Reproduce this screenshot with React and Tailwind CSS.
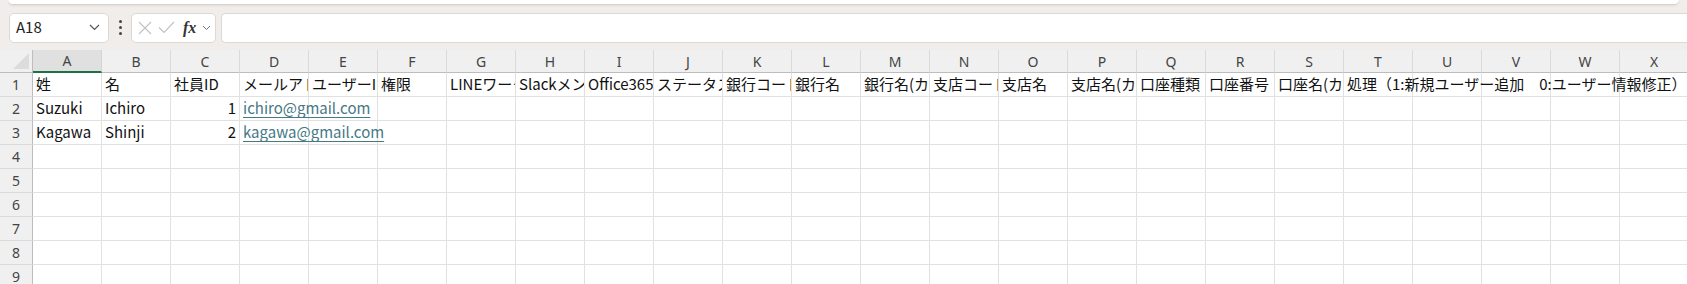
import React from 'react';

const COLS = 'ABCDEFGHIJKLMNOPQRSTUVWX'.split('');

const header = [
  '姓', '名', '社員ID', 'メールアドレス', 'ユーザーID', '権限', 'LINEワークス', 'Slackメンバー', 'Office365', 'ステータス',
  '銀行コード', '銀行名', '銀行名(カナ)', '支店コード', '支店名', '支店名(カナ)', '口座種類', '口座番号', '口座名(カナ)',
];

const rows = [
  { a: 'Suzuki', b: 'Ichiro', c: '1', d: 'ichiro@gmail.com' },
  { a: 'Kagawa', b: 'Shinji', c: '2', d: 'kagawa@gmail.com' },
];

const cellFont = { fontFamily: '"Noto Sans CJK JP", "Noto Sans", sans-serif' };

const NameBox = () => (
  <div className="flex items-center justify-between w-[100px] h-[30px] bg-white border border-[#dcd8d6] rounded-[5px] pl-[6px] pr-[8px]">
    <span className="text-[15px] text-[#222]" style={cellFont}>A18</span>
    <svg width="11" height="7" viewBox="0 0 11 7" fill="none" stroke="#555" strokeWidth="1.2">
      <path d="M1 1l4.5 4.5L10 1" />
    </svg>
  </div>
);

const FormulaButtons = () => (
  <div className="flex items-center w-[85px] h-[30px] bg-white border border-[#dcd8d6] rounded-[5px] pl-[6px] gap-[6px]">
    <svg width="14" height="14" viewBox="0 0 14 14" stroke="#c2c2c2" strokeWidth="1.1">
      <path d="M1 1l12 12M13 1L1 13" />
    </svg>
    <svg width="17" height="13" viewBox="0 0 17 13" fill="none" stroke="#c2c2c2" strokeWidth="1.1">
      <path d="M1 6.5l5 5L16 1" />
    </svg>
    <span className="text-[16px] italic text-[#333] leading-none ml-[2px]" style={{ fontFamily: '"Liberation Serif", serif', fontWeight: 600 }}>fx</span>
    <svg width="9" height="6" viewBox="0 0 9 6" fill="none" stroke="#777" strokeWidth="1">
      <path d="M1 1l3.5 3.5L8 1" />
    </svg>
  </div>
);

const Cell = ({ children, className = '', overflow = false }) => (
  <div
    className={`h-[24px] border-r border-b border-[#e1e1e1] bg-white flex items-center text-[15px] text-[#111] whitespace-nowrap ${overflow ? 'overflow-visible relative z-10' : 'overflow-hidden'} ${className}`}
    style={cellFont}
  >
    {children}
  </div>
);

export default function App() {
  return (
    <div className="w-[1687px] h-[284px] overflow-hidden bg-[#f1edeb] relative">
      {/* ribbon edge */}
      <div className="h-[5px] bg-white border-b border-[#d8d3d1] rounded-b-[6px] mx-[8px] shadow-[0_1px_2px_rgba(0,0,0,0.08)]" />

      {/* formula bar */}
      <div className="flex items-center h-[29px] mt-[8px] pl-[9px]">
        <NameBox />
        <div className="w-[22px] flex flex-col items-center gap-[3px]">
          <span className="w-[3px] h-[3px] rounded-full bg-[#444]" />
          <span className="w-[3px] h-[3px] rounded-full bg-[#444]" />
          <span className="w-[3px] h-[3px] rounded-full bg-[#444]" />
        </div>
        <FormulaButtons />
        <div className="flex-1 h-[30px] ml-[5px] bg-white border border-[#dcd8d6] border-r-0 rounded-l-[5px]" />
      </div>

      {/* sheet */}
      <div className="mt-[8px] grid grid-cols-[33px_repeat(24,69px)] grid-rows-[23px_repeat(9,24px)] bg-white">
        {/* corner */}
        <div className="bg-[#f0f0f0] border-r border-b border-[#bdbdbd] relative overflow-hidden">
          <div className="absolute right-[3px] bottom-[3px] w-0 h-0 border-l-[16px] border-l-transparent border-b-[16px] border-b-[#dcdcdc]" />
        </div>
        {COLS.map((c, i) => (
          <div
            key={c}
            className={`flex items-center justify-center text-[14px] text-[#444] border-r ${i === 0 ? 'bg-[#e0e0e0] border-b-2 border-b-[#1e7145] border-r-[#d4d4d4]' : 'bg-[#f0f0f0] border-b border-b-[#bdbdbd] border-r-[#dadada]'}`}
            style={{ fontFamily: '"Noto Sans", "Liberation Sans", sans-serif' }}
          >
            {c}
          </div>
        ))}

        {Array.from({ length: 9 }).map((_, r) => {
          const n = r + 1;
          return (
            <React.Fragment key={n}>
              <div
                className="bg-[#f0f0f0] border-r border-r-[#bdbdbd] border-b border-b-[#dadada] flex items-center justify-center text-[14px] text-[#444]"
                style={{ fontFamily: '"Noto Sans", "Liberation Sans", sans-serif' }}
              >
                {n}
              </div>
              {COLS.map((c, i) => {
                if (n === 1) {
                  if (i < header.length) return <Cell key={c} className="pl-[3px]">{header[i]}</Cell>;
                  if (i === 19) return <Cell key={c} className="pl-[3px]" overflow>処理（1:新規ユーザー追加　0:ユーザー情報修正）</Cell>;
                  return <Cell key={c} />;
                }
                const row = rows[n - 2];
                if (row) {
                  if (i === 0) return <Cell key={c} className="pl-[3px]">{row.a}</Cell>;
                  if (i === 1) return <Cell key={c} className="pl-[3px]">{row.b}</Cell>;
                  if (i === 2) return <Cell key={c} className="justify-end pr-[3px]">{row.c}</Cell>;
                  if (i === 3) return (
                    <Cell key={c} className="pl-[3px]" overflow>
                      <span className="text-[#467886] underline underline-offset-[3px] decoration-[1px]">{row.d}</span>
                    </Cell>
                  );
                }
                return <Cell key={c} />;
              })}
            </React.Fragment>
          );
        })}
      </div>
    </div>
  );
}
